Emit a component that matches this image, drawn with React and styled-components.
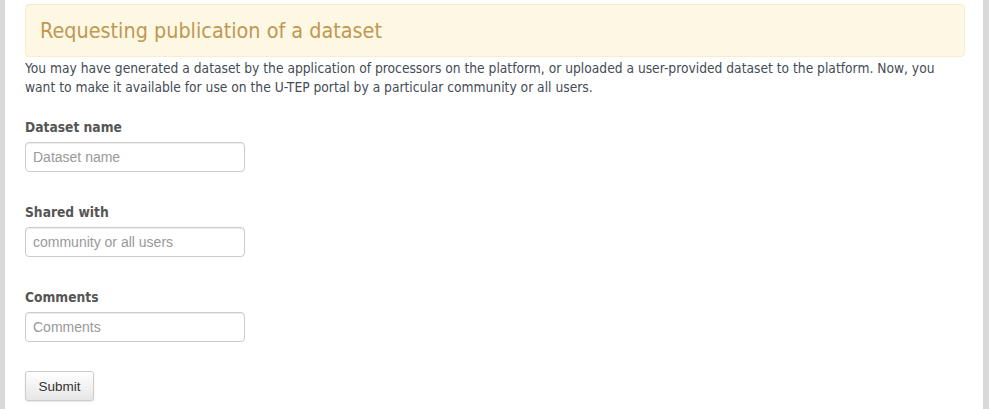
import React from "react";
import styled, { createGlobalStyle } from "styled-components";

const GlobalStyle = createGlobalStyle`
  html, body {
    margin: 0;
    padding: 0;
    background: #ffffff;
  }
`;

const Frame = styled.div`
  display: flex;
  height: 409px;
  background: #d9d9d9;
  padding: 0 6px 0 5px;
  box-sizing: border-box;
`;

const Page = styled.div`
  flex: 1;
  background: #ffffff;
  padding: 4px 18px 0 20px;
  font-family: "DejaVu Sans Condensed", Tahoma, "DejaVu Sans", sans-serif;
  color: #444c55;
`;

const Alert = styled.div`
  background: #fcf8e3;
  border: 1px solid #faebcc;
  border-radius: 4px;
  padding: 0 14px;
  height: 51px;
  display: flex;
  align-items: center;
`;

const Title = styled.h2`
  margin: 0;
  font-size: 21.4px;
  font-weight: normal;
  color: #c09853;
`;

const Intro = styled.p`
  margin: 2px 0 0;
  font-size: 13.7px;
  line-height: 19px;
`;

const Form = styled.form`
  display: flex;
  flex-direction: column;
  margin-top: 22px;
`;

const Group = styled.div`
  display: flex;
  flex-direction: column;
  gap: 6px;
  margin-bottom: 32px;
  &:last-of-type {
    margin-bottom: 29px;
  }
`;

const Label = styled.label`
  font-size: 13.7px;
  font-weight: bold;
  color: #555555;
  line-height: 17px;
`;

const Field = styled.input`
  width: 220px;
  height: 30px;
  box-sizing: border-box;
  border: 1px solid #cccccc;
  border-radius: 4px;
  padding: 0 7px;
  font-family: "Liberation Sans", Arial, sans-serif;
  font-size: 14px;
  color: #555;
  box-shadow: inset 0 1px 1px rgba(0, 0, 0, 0.075);
  &::placeholder {
    color: #999999;
  }
`;

const Button = styled.button`
  align-self: flex-start;
  width: 69px;
  height: 30px;
  border: 1px solid #cccccc;
  border-radius: 3px;
  background: linear-gradient(#ffffff, #e6e6e6);
  box-shadow: 0 1px 2px rgba(0, 0, 0, 0.1);
  font-family: "Liberation Sans", Arial, sans-serif;
  font-size: 13.5px;
  color: #333333;
`;

const fields = [
  { name: "dataset", label: "Dataset name", placeholder: "Dataset name" },
  { name: "shared", label: "Shared with", placeholder: "community or all users" },
  { name: "comments", label: "Comments", placeholder: "Comments" },
];

export default function App() {
  return (
    <>
      <GlobalStyle />
      <Frame>
        <Page>
          <Alert>
            <Title>Requesting publication of a dataset</Title>
          </Alert>
          <Intro>
            You may have generated a dataset by the application of processors on the platform, or
            uploaded a user-provided dataset to the platform. Now, you want to make it available for
            use on the U-TEP portal by a particular community or all users.
          </Intro>
          <Form onSubmit={(e) => e.preventDefault()}>
            {fields.map((f) => (
              <Group key={f.name}>
                <Label htmlFor={f.name}>{f.label}</Label>
                <Field id={f.name} name={f.name} type="text" placeholder={f.placeholder} />
              </Group>
            ))}
            <Button type="submit">Submit</Button>
          </Form>
        </Page>
      </Frame>
    </>
  );
}
